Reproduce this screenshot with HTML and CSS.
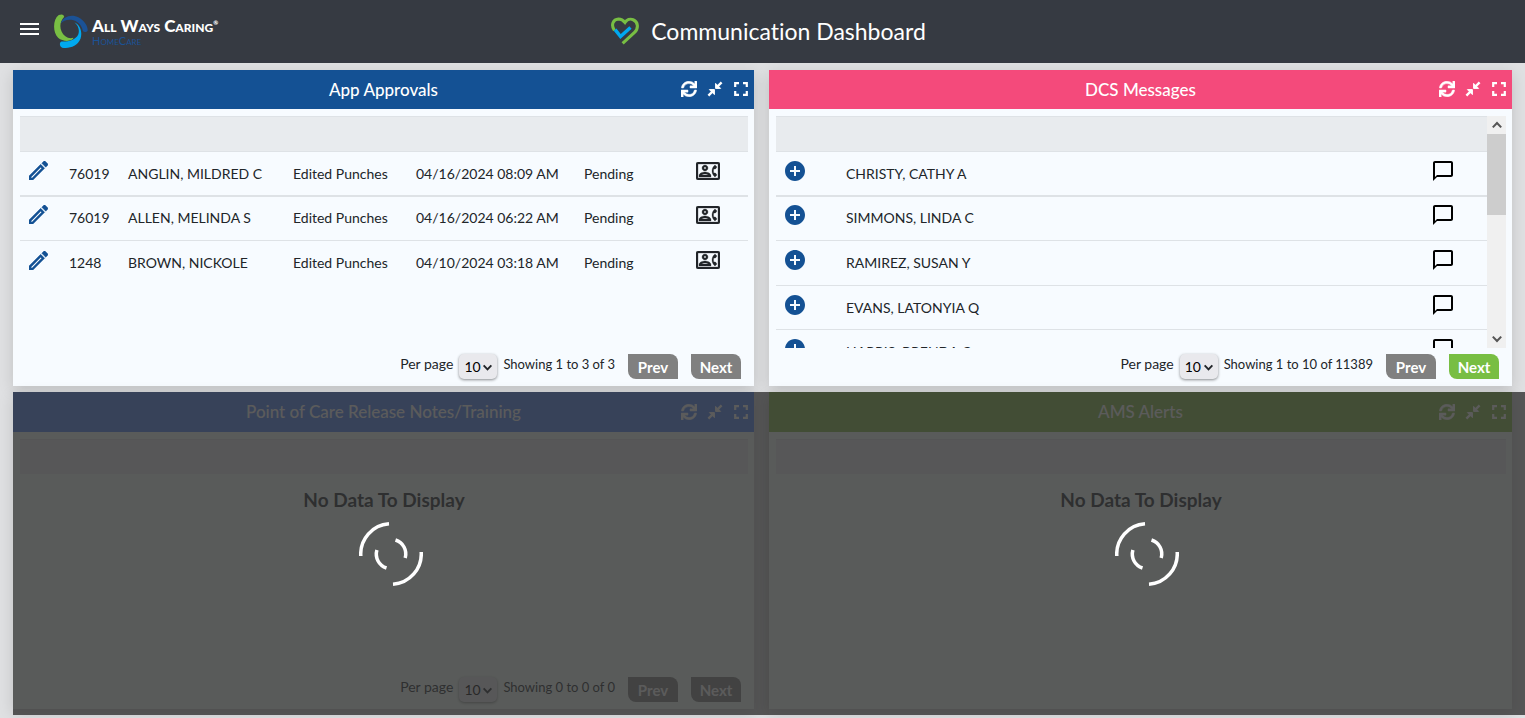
FILE: index.html
```
<!DOCTYPE html>
<html lang="en">
<head>
<meta charset="utf-8">
<title>Communication Dashboard</title>
<link rel="stylesheet" href="styles.css">
</head>
<body>
<svg class="sprite" aria-hidden="true">
  <symbol id="sync" viewBox="0 0 512 512"><path stroke="currentColor" stroke-width="16" d="M440.65 12.57l4 82.77A247.16 247.16 0 0 0 255.83 8C134.73 8 33.91 94.92 12.29 209.82A12 12 0 0 0 24.09 224h49.05a12 12 0 0 0 11.67-9.26 175.91 175.91 0 0 1 317-56.94l-101.46-4.86a12 12 0 0 0-12.57 12v47.41a12 12 0 0 0 12 12H500a12 12 0 0 0 12-12V12a12 12 0 0 0-12-12h-47.37a12 12 0 0 0-11.98 12.57zM255.83 432a175.61 175.61 0 0 1-146-77.8l101.8 4.87a12 12 0 0 0 12.57-12v-47.4a12 12 0 0 0-12-12H12a12 12 0 0 0-12 12V500a12 12 0 0 0 12 12h47.35a12 12 0 0 0 12-12.6l-4.15-82.57A247.17 247.17 0 0 0 255.83 504c121.11 0 221.93-86.92 243.55-201.82a12 12 0 0 0-11.8-14.18h-49.05a12 12 0 0 0-11.67 9.26A175.86 175.86 0 0 1 255.83 432z"/></symbol>
  <symbol id="shrink" viewBox="0 0 16 16"><path d="M8.6 2.4v5h5zM7.4 13.6v-5h-5z" stroke="currentColor" stroke-width="1" stroke-linejoin="round"/><path d="M10 6l4.6-4.6M6 10l-4.6 4.6" fill="none" stroke="currentColor" stroke-width="2.4"/></symbol>
  <symbol id="expand" viewBox="0 0 16 16"><path d="M2.2 6V2.2H6M10 2.2h3.8V6M13.8 10v3.8H10M6 13.8H2.2V10" fill="none" stroke="currentColor" stroke-width="2.2"/></symbol>
  <symbol id="edit" viewBox="3 3 18 18"><path stroke="currentColor" stroke-width=".4" d="M14.06 9.02l.92.92L5.92 19H5v-.92l9.06-9.06M17.66 3c-.25 0-.51.1-.7.29l-1.83 1.83 3.75 3.75 1.83-1.83c.39-.39.39-1.02 0-1.41l-2.34-2.34c-.2-.2-.45-.29-.71-.29zm-3.6 3.19L3 17.25V21h3.75L17.81 9.94l-3.75-3.75z"/></symbol>
  <symbol id="contact" viewBox="0 3 24 18"><path stroke="currentColor" stroke-width=".3" d="M22 3H2C.9 3 0 3.9 0 5v14c0 1.1.9 2 2 2h20c1.1 0 1.99-.9 1.99-2L24 5c0-1.1-.9-2-2-2zm0 16H2V5h20v14zm-2.99-1.01L21 16l-1.51-2h-1.64c-.22-.63-.35-1.3-.35-2s.13-1.37.35-2h1.64L21 8l-1.99-1.99c-1.31.98-2.28 2.37-2.73 3.99-.18.64-.28 1.31-.28 2s.1 1.36.28 2c.45 1.61 1.42 3.01 2.73 3.99zM9 12c1.65 0 3-1.35 3-3s-1.35-3-3-3-3 1.35-3 3 1.35 3 3 3zm0-4c.55 0 1 .45 1 1s-.45 1-1 1-1-.45-1-1 .45-1 1-1zm6 8.59c0-2.5-3.97-3.58-6-3.58s-6 1.08-6 3.58V18h12v-1.41zM5.48 16c.74-.5 2.22-1 3.52-1s2.77.49 3.52 1H5.48z"/></symbol>
  <symbol id="add" viewBox="2 2 20 20"><path d="M12 2C6.48 2 2 6.48 2 12s4.48 10 10 10 10-4.48 10-10S17.52 2 12 2zm5 11h-4v4h-2v-4H7v-2h4V7h2v4h4v2z"/></symbol>
  <symbol id="chat" viewBox="2 2 20 20"><path d="M20 2H4c-1.1 0-2 .9-2 2v18l4-4h14c1.1 0 2-.9 2-2V4c0-1.1-.9-2-2-2zm0 14H6l-2 2V4h16v12z"/></symbol>
  <symbol id="chevron" viewBox="0 0 10 10"><path d="M1.5 3L5 6.7 8.500 3" fill="none" stroke="currentColor" stroke-width="1.7"/></symbol>
  <symbol id="spinner" viewBox="0 0 64 64"><g fill="none" stroke="#fff" stroke-width="3.500"><path d="M1.800 34A30.300 30.300 0 0 1 30 1.800M62.200 30A30.300 30.300 0 0 1 34 62.200"/><path d="M17.900 28A14.600 14.600 0 0 0 27.500 46M36.500 18A14.600 14.600 0 0 1 46.200 36"/></g></symbol>
</svg>

<header class="topbar">
  <div class="topbar-start">
    <button class="menu" aria-label="Menu"><span></span><span></span><span></span></button>
    <a class="brand" href="#">
      <svg class="brand-mark" viewBox="162 44 100 100" aria-hidden="true">
        <path fill="#78be43" d="M176 47Q190 42 192 52C180 66 178 80 184 95C191 111 205 118 219 114C218 124 190 128 174 114C158 98 158 60 176 47Z"/>
        <path fill="#1b5296" d="M182 72C188 50 215 43 235 54C252 64 262 80 261 93C258 98 250 98 247 94C243 76 232 64 213 61C198 60 188 64 182 72Z"/>
        <path fill="#00a9f0" d="M222 68C240 76 246 98 240 117C230 140 208 146 186 143C178 140 177 128 184 125C205 126 225 120 233 105C238 92 234 78 222 68Z"/>
      </svg>
      <span class="brand-text"><span class="brand-name">All Ways Caring<sup>®</sup></span><span class="brand-sub">HomeCare</span></span>
    </a>
  </div>
  <h1 class="title">
    <svg class="title-mark" viewBox="56 55 82 82" aria-hidden="true">
      <path fill="none" stroke="#78be43" stroke-width="9" d="M66 94C55 78 62 62 78 61C88 61 93 66 97 71C102 63 112 59 121 63C136 69 137 89 125 100L90 132"/>
      <path fill="none" stroke="#00a9f0" stroke-width="10" d="M68 92L84 112L113 86"/>
    </svg>
    Communication Dashboard
  </h1>
</header>

<main class="board">
  <div class="cell">
    <section class="card">
      <div class="card-head blue"><h2>App Approvals</h2>
        <div class="tools"><button aria-label="Refresh"><svg><use href="#sync"/></svg></button><button aria-label="Collapse"><svg><use href="#shrink"/></svg></button><button aria-label="Full screen"><svg><use href="#expand"/></svg></button></div>
      </div>
      <div class="card-body">
        <div class="scroller">
          <table class="grid">
            <colgroup><col class="c-edit"><col class="c-id"><col><col class="c-type"><col class="c-date"><col class="c-status"><col class="c-contact"></colgroup>
            <thead><tr><th colspan="7"></th></tr></thead>
            <tbody>
              <tr><td><button class="row-btn accent" aria-label="Edit"><svg class="i-edit"><use href="#edit"/></svg></button></td><td>76019</td><td>ANGLIN, MILDRED C</td><td>Edited Punches</td><td>04/16/2024 08:09 AM</td><td>Pending</td><td><button class="row-btn" aria-label="Contact"><svg class="i-contact"><use href="#contact"/></svg></button></td></tr>
              <tr><td><button class="row-btn accent" aria-label="Edit"><svg class="i-edit"><use href="#edit"/></svg></button></td><td>76019</td><td>ALLEN, MELINDA S</td><td>Edited Punches</td><td>04/16/2024 06:22 AM</td><td>Pending</td><td><button class="row-btn" aria-label="Contact"><svg class="i-contact"><use href="#contact"/></svg></button></td></tr>
              <tr><td><button class="row-btn accent" aria-label="Edit"><svg class="i-edit"><use href="#edit"/></svg></button></td><td>1248</td><td>BROWN, NICKOLE</td><td>Edited Punches</td><td>04/10/2024 03:18 AM</td><td>Pending</td><td><button class="row-btn" aria-label="Contact"><svg class="i-contact"><use href="#contact"/></svg></button></td></tr>
            </tbody>
          </table>
        </div>
      </div>
      <div class="pager">
        <label for="pp1">Per page</label>
        <span class="select"><select id="pp1"><option>10</option></select><svg><use href="#chevron"/></svg></span>
        <span class="range">Showing 1 to 3 of 3</span>
        <button class="page-btn">Prev</button><button class="page-btn">Next</button>
      </div>
    </section>
  </div>

  <div class="cell">
    <section class="card">
      <div class="card-head pink"><h2>DCS Messages</h2>
        <div class="tools"><button aria-label="Refresh"><svg><use href="#sync"/></svg></button><button aria-label="Collapse"><svg><use href="#shrink"/></svg></button><button aria-label="Full screen"><svg><use href="#expand"/></svg></button></div>
      </div>
      <div class="card-body">
        <div class="scroller">
          <table class="grid dark-icons">
            <colgroup><col class="c-add"><col><col class="c-chat"></colgroup>
            <thead><tr><th colspan="3"></th></tr></thead>
            <tbody>
              <tr><td><button class="row-btn accent" aria-label="Add"><svg class="i-round"><use href="#add"/></svg></button></td><td>CHRISTY, CATHY A</td><td><button class="row-btn" aria-label="Message"><svg class="i-round"><use href="#chat"/></svg></button></td></tr>
              <tr><td><button class="row-btn accent" aria-label="Add"><svg class="i-round"><use href="#add"/></svg></button></td><td>SIMMONS, LINDA C</td><td><button class="row-btn" aria-label="Message"><svg class="i-round"><use href="#chat"/></svg></button></td></tr>
              <tr><td><button class="row-btn accent" aria-label="Add"><svg class="i-round"><use href="#add"/></svg></button></td><td>RAMIREZ, SUSAN Y</td><td><button class="row-btn" aria-label="Message"><svg class="i-round"><use href="#chat"/></svg></button></td></tr>
              <tr><td><button class="row-btn accent" aria-label="Add"><svg class="i-round"><use href="#add"/></svg></button></td><td>EVANS, LATONYIA Q</td><td><button class="row-btn" aria-label="Message"><svg class="i-round"><use href="#chat"/></svg></button></td></tr>
              <tr><td><button class="row-btn accent" aria-label="Add"><svg class="i-round"><use href="#add"/></svg></button></td><td>HARRIS, BRENDA C</td><td><button class="row-btn" aria-label="Message"><svg class="i-round"><use href="#chat"/></svg></button></td></tr>
            </tbody>
          </table>
        </div>
        <div class="bar" aria-hidden="true">
          <span class="bar-end up"><svg><use href="#chevron"/></svg></span>
          <span class="bar-thumb"></span>
          <span class="bar-end"><svg><use href="#chevron"/></svg></span>
        </div>
      </div>
      <div class="pager">
        <label for="pp2">Per page</label>
        <span class="select"><select id="pp2"><option>10</option></select><svg><use href="#chevron"/></svg></span>
        <span class="range">Showing 1 to 10 of 11389</span>
        <button class="page-btn">Prev</button><button class="page-btn go">Next</button>
      </div>
    </section>
  </div>

  <div class="cell">
    <section class="card idle">
      <div class="card-head royal"><h2>Point of Care Release Notes/Training</h2>
        <div class="tools"><button aria-label="Refresh"><svg><use href="#sync"/></svg></button><button aria-label="Collapse"><svg><use href="#shrink"/></svg></button><button aria-label="Full screen"><svg><use href="#expand"/></svg></button></div>
      </div>
      <div class="card-body">
        <div class="scroller">
          <table class="grid"><thead><tr><th></th></tr></thead></table>
          <p class="empty">No Data To Display</p>
        </div>
      </div>
      <div class="pager">
        <label for="pp3">Per page</label>
        <span class="select"><select id="pp3"><option>10</option></select><svg><use href="#chevron"/></svg></span>
        <span class="range">Showing 0 to 0 of 0</span>
        <button class="page-btn">Prev</button><button class="page-btn">Next</button>
      </div>
    </section>
    <div class="loading" role="status" aria-label="Loading"><svg><use href="#spinner"/></svg></div>
  </div>

  <div class="cell">
    <section class="card idle">
      <div class="card-head green"><h2>AMS Alerts</h2>
        <div class="tools"><button aria-label="Refresh"><svg><use href="#sync"/></svg></button><button aria-label="Collapse"><svg><use href="#shrink"/></svg></button><button aria-label="Full screen"><svg><use href="#expand"/></svg></button></div>
      </div>
      <div class="card-body">
        <div class="scroller">
          <table class="grid"><thead><tr><th></th></tr></thead></table>
          <p class="empty">No Data To Display</p>
        </div>
      </div>
    </section>
    <div class="loading" role="status" aria-label="Loading"><svg><use href="#spinner"/></svg></div>
  </div>
</main>
</body>
</html>
```
FILE: styles.css
```
* { box-sizing: border-box; }

body {
  margin: 0;
  min-height: 100vh;
  display: flex;
  flex-direction: column;
  background: #dfe0e2;
  color: #212529;
  font: 14px/20px Lato, "Open Sans", sans-serif;
  font-variant-ligatures: none;
}

svg { display: block; fill: currentColor; }
button { border: 0; padding: 0; background: none; color: inherit; font: inherit; }
h1, h2, p { margin: 0; }
.sprite { position: absolute; width: 0; height: 0; }

/* Top bar */
.topbar {
  display: grid;
  grid-template-columns: 1fr auto 1fr;
  align-items: center;
  height: 63px;
  padding: 0 8px 2px 20px;
  background: #363a42;
  color: #fff;
}
.topbar-start { display: flex; align-items: center; gap: 15px; }
.menu { display: grid; gap: 3px; width: 19px; padding-bottom: 3px; }
.menu span { height: 2px; background: #fff; }
.brand { display: flex; gap: 4px; color: inherit; text-decoration: none; }
.brand-mark { width: 34px; height: 34px; }
.brand-text { display: flex; flex-direction: column; font-variant-caps: small-caps; }
.brand-name { font-size: 17px; line-height: 24px; font-weight: 900; white-space: nowrap; }
.brand-name sup { font-size: 6px; line-height: 6px; }
.brand-sub { font-size: 11px; line-height: 6px; color: #1b5296; }
.title { display: flex; align-items: center; gap: 12px; font-size: 23px; line-height: 32px; font-weight: 400; }
.title-mark { width: 28px; height: 28px; }

/* Board */
.board {
  flex: 1;
  display: grid;
  grid-template-columns: 1fr 1fr;
  grid-template-rows: auto 1fr;
  padding: 7px 0 3px 13px;
}
.cell { position: relative; display: flex; padding: 0 15px 6px 0; }
.cell:nth-child(even) { padding-right: 13px; }
.card {
  flex: 1;
  display: flex;
  flex-direction: column;
  background: #f7fbff;
  box-shadow: 0 4px 14px rgba(0, 0, 0, .14);
}
.card-head {
  display: grid;
  grid-template-columns: 1fr auto 1fr;
  align-items: center;
  height: 39px;
  padding: 0 5px;
  color: #fff;
}
.card-head h2 { grid-column: 2; font-size: 17px; line-height: 24px; font-weight: 500; }
.blue { background: #145194; }
.pink { background: #f44a7b; }
.royal { background: #4b82f5; }
.green { background: #82b941; }
.idle { background: #f5fff9; }
.idle .card-head { height: 40px; }
.tools { justify-self: end; display: flex; gap: 10px; padding-bottom: 1px; }
.tools svg { width: 16px; height: 16px; }

.card-body { display: flex; height: 232px; margin: 7px 6px 6px 7px; }
.scroller { flex: 1; overflow: hidden; }

.grid { width: 100%; table-layout: fixed; border-collapse: separate; border-spacing: 0; }
.grid th { height: 35px; padding: 0; background: #e8ebee; border-top: 1px solid #dee2e6; }
.grid td { height: 45px; padding: 0 0 0 9px; border-top: 1px solid #dee2e6; white-space: nowrap; }
.grid tr:nth-child(3n+1) td { height: 44px; }
.grid tbody tr:nth-child(2) td { border-top-width: 2px; padding-bottom: 2px; }
.c-edit { width: 40px; }
.c-id { width: 59px; }
.c-type { width: 123px; }
.c-date { width: 168px; }
.c-status { width: 112px; }
.c-contact { width: 61px; }
.c-add { width: 61px; }
.c-chat { width: 63px; }
.row-btn { display: block; padding-bottom: 6px; }
.accent { color: #145194; }
.dark-icons .row-btn:not(.accent) { color: #000; }
.i-edit { width: 19px; height: 19px; }
.i-contact { width: 24px; height: 18px; }
.i-round { width: 20px; height: 20px; }

.bar { display: flex; flex-direction: column; width: 19px; background: #f0f0f0; color: #555; }
.bar-end { display: grid; place-items: center; height: 18px; }
.bar-end:last-child { margin-top: auto; }
.bar-end svg { width: 12px; height: 12px; }
.up svg { transform: rotate(180deg); }
.bar-thumb { height: 81px; background: #cdcdcd; }

/* Pager */
.pager { display: flex; justify-content: flex-end; padding: 0 13px 7px; }
.range { font-size: 13px; }
.select { position: relative; margin: 0 6px; }
.select select {
  appearance: none;
  display: block;
  width: 38px;
  height: 25px;
  padding: 0 0 0 5px;
  border: 0;
  border-radius: 5px;
  background: #e9e9ed;
  box-shadow: 0 1px 3px rgba(0, 0, 0, .45);
  color: #000;
  font: inherit;
}
.select svg { position: absolute; right: 4px; top: 8px; width: 11px; height: 11px; pointer-events: none; }
.page-btn {
  width: 50px;
  height: 25px;
  margin-left: 13px;
  border-radius: 0 8px;
  background: #808080;
  color: #fff;
  font-size: 15px;
  font-weight: 700;
}
.go { background: #78be43; }

.empty { padding-top: 14px; text-align: center; font-size: 19px; line-height: 24px; font-weight: 700; }

/* Loading cover */
.loading { position: absolute; inset: 0; display: grid; place-items: center; background: rgba(50, 50, 50, .8); }
.loading svg { width: 64px; height: 64px; }
```
